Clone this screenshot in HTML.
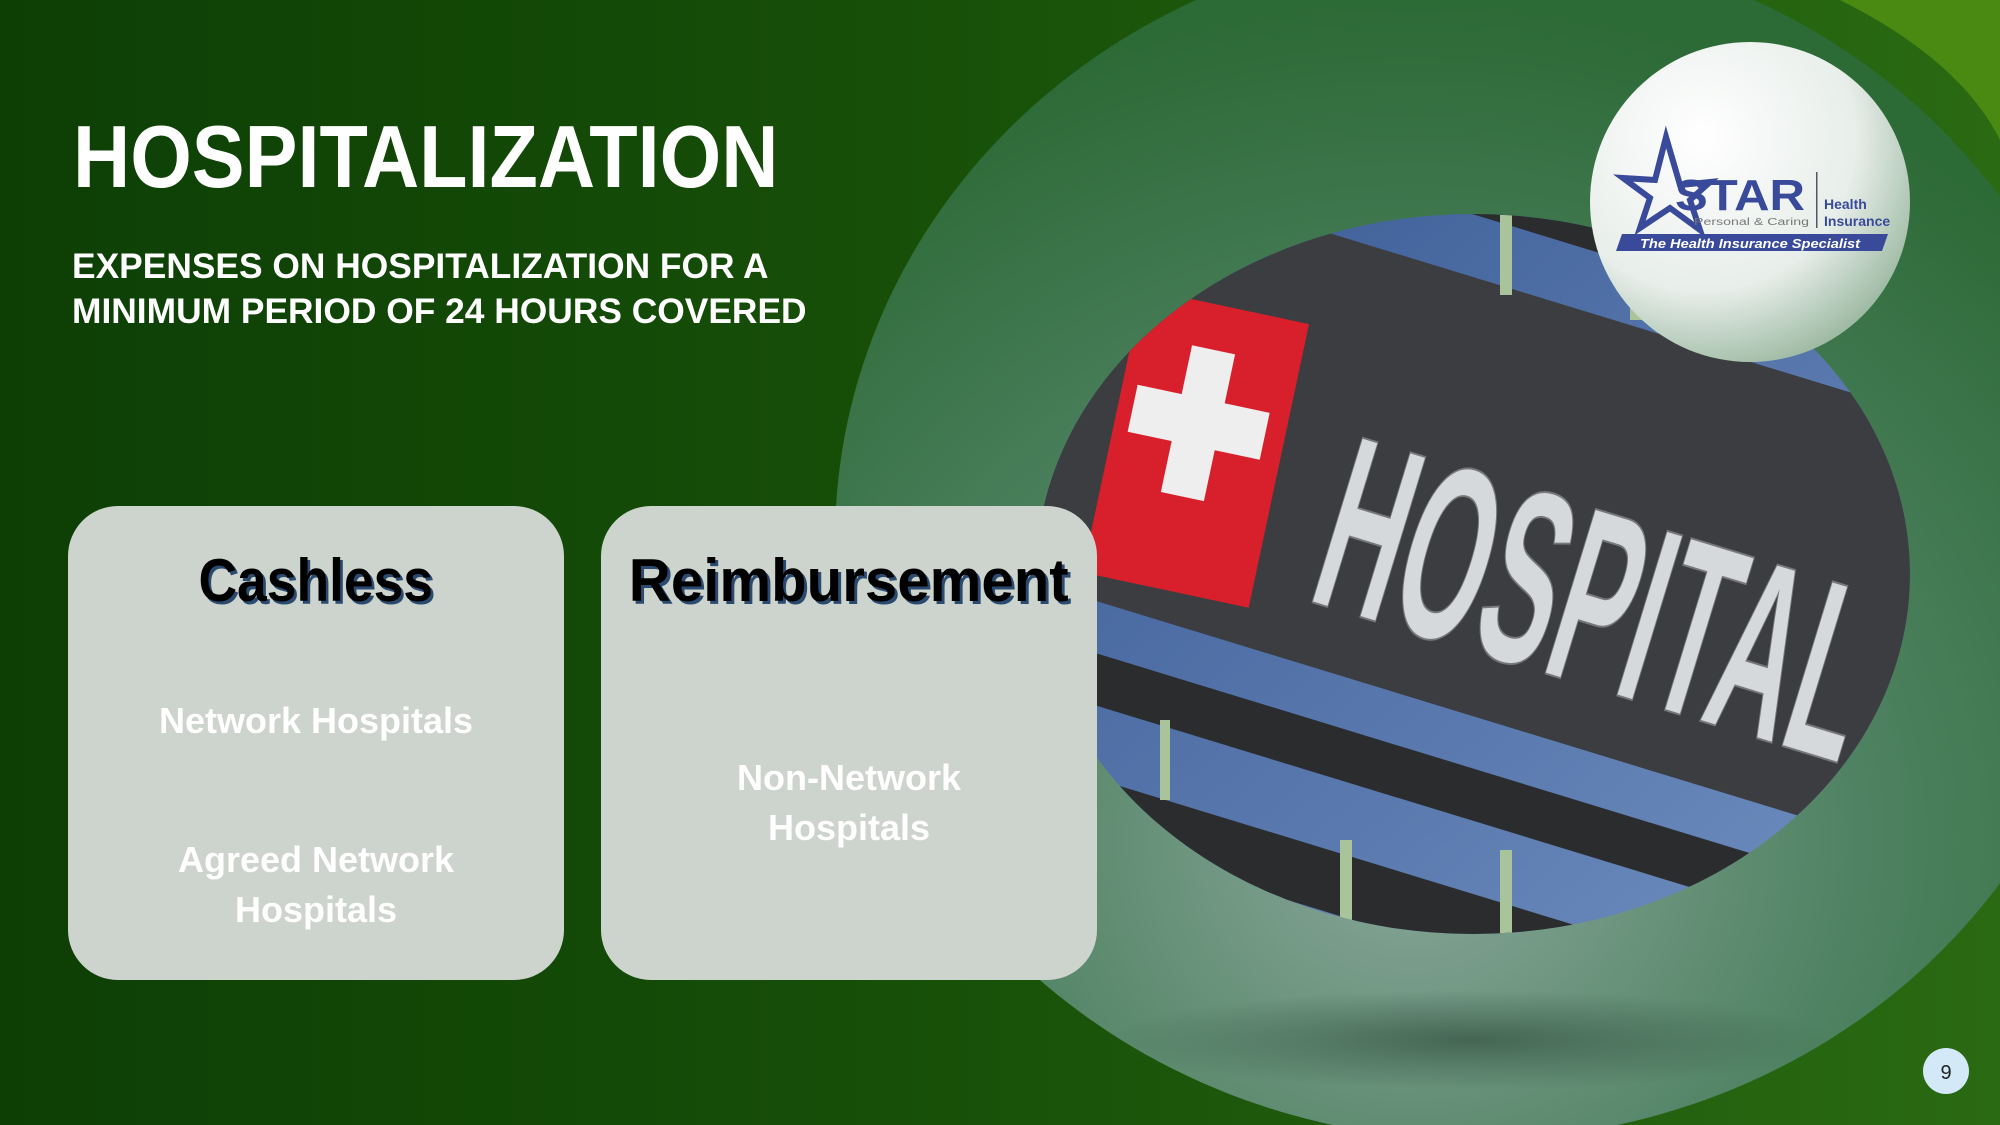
<!DOCTYPE html>
<html><head><meta charset="utf-8">
<style>
*{margin:0;padding:0;box-sizing:border-box}
body{width:2000px;height:1125px;overflow:hidden;position:relative;font-family:"Liberation Sans",sans-serif;background:linear-gradient(90deg,#0d3f05 0%,#174f08 45%,#2a6a12 100%)}
.t{position:absolute;white-space:nowrap;transform-origin:left top}
.card{position:absolute;top:506px;width:496px;height:474px;border-radius:50px;background:#cdd3cd}
.ct{position:absolute;left:0;width:100%;text-align:center;white-space:nowrap}
.h{font-weight:bold;font-size:60px;color:#000;text-shadow:3px 3px 0 #2a4a70}
.w{font-weight:bold;font-size:36px;color:#fff;line-height:50px}
.w span{display:inline-block;transform:scaleX(1)}
.h span{display:inline-block}
</style></head><body>
<svg width="2000" height="1125" style="position:absolute;left:0;top:0">
<defs>
<radialGradient id="bg" cx="0.45" cy="0.75" r="0.7">
<stop offset="0" stop-color="#8aa79a"/><stop offset="0.5" stop-color="#4f8262"/><stop offset="1" stop-color="#2c6a36"/>
</radialGradient>
<radialGradient id="logo" cx="0.35" cy="0.3" r="0.8">
<stop offset="0" stop-color="#ffffff"/><stop offset="0.6" stop-color="#e8eeea"/><stop offset="1" stop-color="#8fb095"/>
</radialGradient>
<radialGradient id="shad" cx="0.5" cy="0.5" r="0.5">
<stop offset="0" stop-color="#3a5a48" stop-opacity=".8"/><stop offset="1" stop-color="#3a5a48" stop-opacity="0"/>
</radialGradient>
<linearGradient id="sky" x1="0" y1="0" x2="1" y2="1"><stop offset="0" stop-color="#3a5a95"/><stop offset="1" stop-color="#6f8fc0"/></linearGradient>
<clipPath id="el"><ellipse cx="1473" cy="574" rx="437" ry="360"/></clipPath>
</defs>
<path d="M1840 0 L2000 0 L2000 140 Q1960 60 1840 0Z" fill="#4a8a12"/>
<ellipse cx="1475" cy="540" rx="640" ry="600" fill="url(#bg)"/>
<ellipse cx="1470" cy="1040" rx="360" ry="50" fill="url(#shad)"/>
<g clip-path="url(#el)">
<rect x="1030" y="200" width="890" height="740" fill="url(#sky)"/>
<g transform="rotate(17 1473 574)">
<rect x="950" y="170" width="1100" height="60" fill="#2a2c2e"/>
<rect x="950" y="290" width="1100" height="420" fill="#3b3d40"/>
<rect x="950" y="760" width="1100" height="50" fill="#2a2c2e"/>
<rect x="950" y="880" width="1100" height="60" fill="#2a2c2e"/>
</g>
<g fill="#a9c39a"><rect x="1500" y="215" width="12" height="80"/><rect x="1630" y="250" width="12" height="70"/><rect x="1340" y="840" width="12" height="100"/><rect x="1500" y="850" width="12" height="90"/><rect x="1160" y="720" width="10" height="80"/></g>
<g transform="rotate(12 1180 450)"><rect x="1110" y="300" width="170" height="290" fill="#d8202c"/><rect x="1170" y="345" width="44" height="150" fill="#eee"/><rect x="1125" y="395" width="135" height="48" fill="#eee"/></g>
<text x="1305" y="600" transform="rotate(17 1305 600)" font-family="Liberation Sans" font-weight="bold" font-size="250" fill="#d5d9dc" stroke="#777" stroke-width="2" textLength="560" lengthAdjust="spacingAndGlyphs">HOSPITAL</text>
</g>
<circle cx="1750" cy="202" r="160" fill="url(#logo)"/>
<path d="M1666 137 L1680 185 L1710 182 L1690 200 L1700 230 L1670 208 L1640 228 L1650 198 L1623 178 L1655 180Z" fill="none" stroke="#3a4a9a" stroke-width="6"/>
<text x="1675" y="210" font-family="Liberation Sans" font-weight="bold" font-size="44" fill="#3a4a9a" textLength="130" lengthAdjust="spacingAndGlyphs">STAR</text>
<text x="1694" y="225" font-family="Liberation Sans" font-size="10" fill="#777" textLength="115" lengthAdjust="spacingAndGlyphs">Personal &amp; Caring</text>
<rect x="1816" y="172" width="1.5" height="56" fill="#556"/>
<text x="1824" y="209" font-family="Liberation Sans" font-weight="bold" font-size="14" fill="#3a4a9a">Health</text>
<text x="1824" y="226" font-family="Liberation Sans" font-weight="bold" font-size="14" fill="#3a4a9a">Insurance</text>
<path d="M1622 234 L1888 234 L1882 251 L1616 251Z" fill="#3a4a9a"/>
<text x="1640" y="248" font-family="Liberation Sans" font-weight="bold" font-style="italic" font-size="13" fill="#fff" textLength="220" lengthAdjust="spacingAndGlyphs">The Health Insurance Specialist</text>
<circle cx="1946" cy="1071" r="23" fill="#d4e9f7"/>
<text x="1946" y="1079" text-anchor="middle" font-family="Liberation Sans" font-size="20" fill="#222">9</text>
</svg>
<div class="t" style="left:73px;top:106px;font-size:88px;font-weight:bold;color:#fff;transform:scaleX(.90)">HOSPITALIZATION</div>
<div class="t" style="left:72px;top:244px;font-size:35px;font-weight:bold;color:#fff;line-height:45px;transform:scaleX(1.01)">EXPENSES ON HOSPITALIZATION FOR A<br>MINIMUM PERIOD OF 24 HOURS COVERED</div>
<div class="card" style="left:68px">
<div class="ct h" style="top:40px"><span style="transform:scaleX(.89)">Cashless</span></div>
<div class="ct w" style="top:190px"><span>Network Hospitals</span></div>
<div class="ct w" style="top:329px"><span>Agreed Network</span><br><span>Hospitals</span></div>
</div>
<div class="card" style="left:601px">
<div class="ct h" style="top:40px"><span style="transform:scaleX(.97)">Reimbursement</span></div>
<div class="ct w" style="top:247px"><span>Non-Network</span><br><span>Hospitals</span></div>
</div>
</body></html>
